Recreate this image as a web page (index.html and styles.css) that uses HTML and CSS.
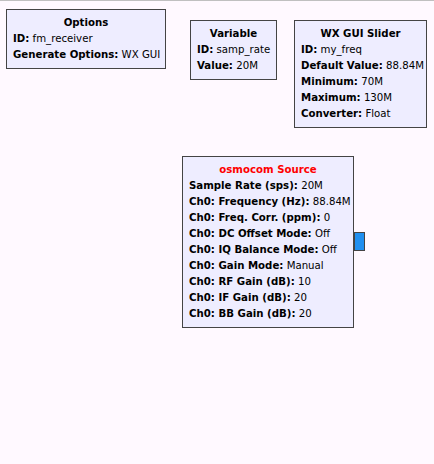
FILE: index.html
```
<!DOCTYPE html>
<html>
<head>
<meta charset="utf-8">
<link rel="stylesheet" href="styles.css">
</head>
<body>
<div class="canvas">
  <div class="block options">
    <div class="title">Options</div>
    <div class="param"><b>ID:</b> fm_receiver</div>
    <div class="param"><b>Generate Options:</b> WX GUI</div>
  </div>
  <div class="block variable">
    <div class="title">Variable</div>
    <div class="param"><b>ID:</b> samp_rate</div>
    <div class="param"><b>Value:</b> 20M</div>
  </div>
  <div class="block slider">
    <div class="title">WX GUI Slider</div>
    <div class="param"><b>ID:</b> my_freq</div>
    <div class="param"><b>Default Value:</b> 88.84M</div>
    <div class="param"><b>Minimum:</b> 70M</div>
    <div class="param"><b>Maximum:</b> 130M</div>
    <div class="param"><b>Converter:</b> Float</div>
  </div>
  <div class="block osmo">
    <div class="title error">osmocom Source</div>
    <div class="param"><b>Sample Rate (sps):</b> 20M</div>
    <div class="param"><b>Ch0: Frequency (Hz):</b> 88.84M</div>
    <div class="param"><b>Ch0: Freq. Corr. (ppm):</b> 0</div>
    <div class="param"><b>Ch0: DC Offset Mode:</b> Off</div>
    <div class="param"><b>Ch0: IQ Balance Mode:</b> Off</div>
    <div class="param"><b>Ch0: Gain Mode:</b> Manual</div>
    <div class="param"><b>Ch0: RF Gain (dB):</b> 10</div>
    <div class="param"><b>Ch0: IF Gain (dB):</b> 20</div>
    <div class="param"><b>Ch0: BB Gain (dB):</b> 20</div>
    <div class="port"></div>
  </div>
</div>
</body>
</html>
```
FILE: styles.css
```
html, body {
  margin: 0;
  padding: 0;
  background: #fff9ff;
}
.canvas {
  position: relative;
  width: 434px;
  height: 464px;
  border-top: 1px solid #c0c0c0;
  box-sizing: border-box;
  font-family: "DejaVu Sans", sans-serif;
  font-size: 10.2px;
  color: #000;
}
.block {
  position: absolute;
  box-sizing: border-box;
  background: #eeedff;
  border: 1px solid #444444;
  padding: 5px 6px 5px 6px;
  line-height: 16px;
}
.title {
  font-weight: bold;
  text-align: center;
}
.title.error {
  color: #ff0000;
}
.param {
  white-space: nowrap;
}
.param b {
  font-weight: bold;
}
.options { left: 6px; top: 8px; width: 160px; }
.variable { left: 190px; top: 19px; width: 87px; }
.slider { left: 294px; top: 19px; width: 133px; }
.osmo { left: 182px; top: 155px; width: 172px; }
.port {
  position: absolute;
  right: -12px;
  top: 75px;
  width: 9px;
  height: 17px;
  background: #2090f0;
  border: 1px solid #444444;
}
```
